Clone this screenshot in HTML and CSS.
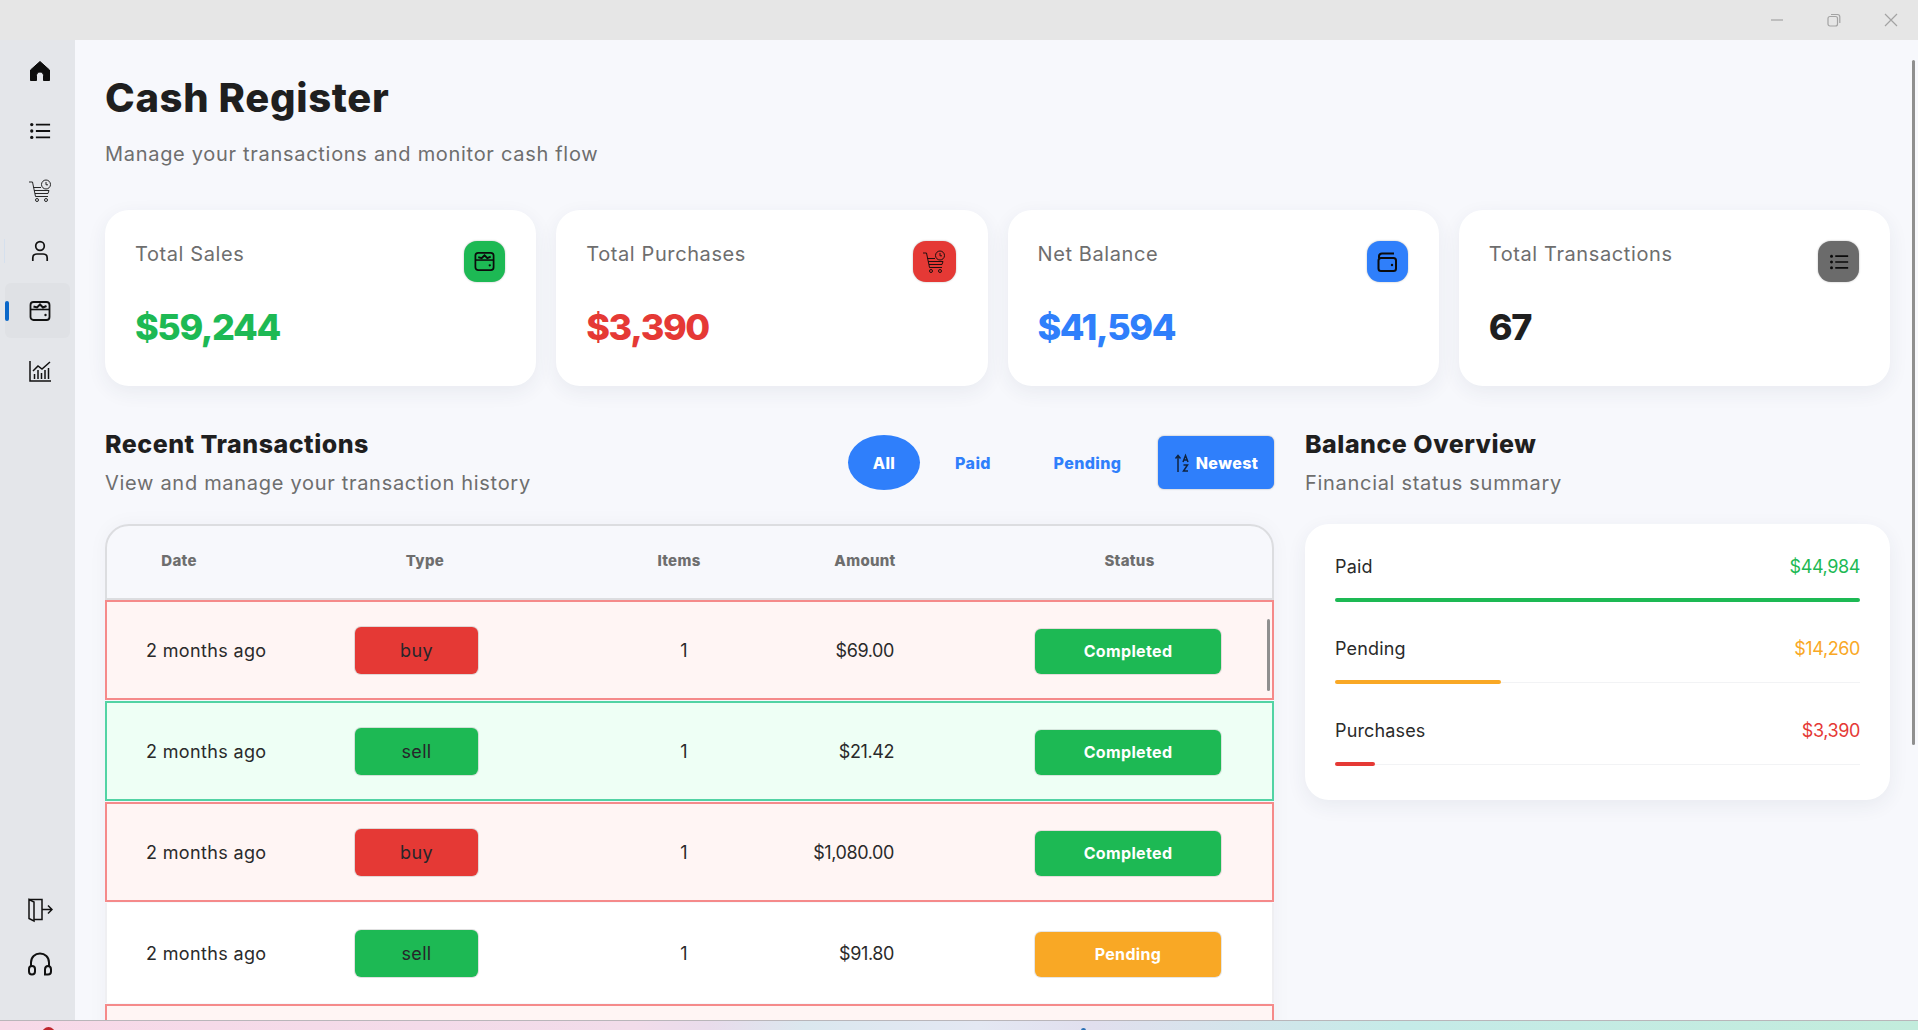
FILE: index.html
```html
<!DOCTYPE html>
<html lang="en">
<head>
    <meta charset="UTF-8">
    <meta name="viewport" content="width=device-width, initial-scale=1.0">
    <title>Cash Register</title>
    <link rel="stylesheet" href="styles.css">
</head>
<body>
    <svg class="sprites" width="0" height="0">
        <symbol id="i-wallet" viewBox="0 0 24 24">
            <rect x="2.500" y="3" width="19" height="18" rx="3" fill="none" stroke="currentColor" stroke-width="1.800"/>
            <path d="M2.500 10.500H21.500" fill="none" stroke="currentColor" stroke-width="1.600"/>
            <path d="M5.500 7.500L9 8.500L12 5.500L15 8.500L18.500 7" fill="none" stroke="currentColor" stroke-width="2"/>
            <circle cx="17.500" cy="16" r="1.200" fill="currentColor"/>
        </symbol>
        <symbol id="i-cart" viewBox="0 0 24 24">
            <path d="M1 3H4.500L7.500 17.500H20" fill="none" stroke="currentColor" stroke-width="0.900"/>
            <path d="M5.500 8.500H13M6.300 11.500H21M7 14.500H20L21 11.500" fill="none" stroke="currentColor" stroke-width="0.900"/>
            <circle cx="9" cy="21" r="1.500" fill="none" stroke="currentColor" stroke-width="0.900"/>
            <circle cx="18" cy="21" r="1.500" fill="none" stroke="currentColor" stroke-width="0.900"/>
            <circle cx="18" cy="5.500" r="4.500" fill="none" stroke="currentColor" stroke-width="0.900"/>
            <path d="M18 3V5.800H20" fill="none" stroke="currentColor" stroke-width="0.900"/>
        </symbol>
        <symbol id="i-list" viewBox="0 0 24 24">
            <circle cx="3" cy="5" r="1.800" fill="currentColor"/>
            <circle cx="3" cy="12" r="1.800" fill="currentColor"/>
            <circle cx="3" cy="19" r="1.800" fill="currentColor"/>
            <path d="M7.500 5H23M7.500 12H23M7.500 19H23" fill="none" stroke="currentColor" stroke-width="2"/>
        </symbol>
        <symbol id="i-card" viewBox="0 0 24 24">
            <path d="M4 8V6.500C4 4.500 5.500 3.500 7 3.500H19" fill="none" stroke="currentColor" stroke-width="2"/>
            <rect x="3.500" y="8" width="17.500" height="13" rx="2.500" fill="none" stroke="currentColor" stroke-width="2"/>
            <circle cx="17" cy="15" r="1.200" fill="currentColor"/>
        </symbol>
    </svg>

    <div class="titlebar">
        <svg class="win-btn" width="14" height="14" viewBox="0 0 14 14"><path d="M1 7H13" stroke="#a3a3a3" stroke-width="1.200"/></svg>
        <svg class="win-btn" width="14" height="14" viewBox="0 0 14 14"><rect x="1" y="3.500" width="9.500" height="9.500" rx="2" fill="none" stroke="#a3a3a3" stroke-width="1.200"/><path d="M4 1.500H10.500C12 1.500 12.800 2.300 12.800 3.800V10" fill="none" stroke="#a3a3a3" stroke-width="1.200"/></svg>
        <svg class="win-btn" width="14" height="14" viewBox="0 0 14 14"><path d="M1 1L13 13M13 1L1 13" stroke="#a3a3a3" stroke-width="1.200"/></svg>
    </div>

    <div class="app">
        <nav class="sidebar">
            <a class="nav-item">
                <svg width="24" height="24" viewBox="0 0 24 24"><path fill-rule="evenodd" d="M12 2.500L21.500 11V21.500H15.500V16.500C15.500 14.500 14 13 12 13S8.500 14.500 8.500 16.500V21.500H2.500V11Z" fill="#0d0d0d" stroke="#0d0d0d" stroke-width="1" stroke-linejoin="round"/></svg>
            </a>
            <a class="nav-item"><svg class="nav-ic" width="22" height="22"><use href="#i-list"/></svg></a>
            <a class="nav-item"><svg class="nav-ic" width="24" height="24"><use href="#i-cart"/></svg></a>
            <a class="nav-item nav-hover">
                <svg width="24" height="24" viewBox="0 0 24 24" fill="none" stroke="#111" stroke-width="1.700"><circle cx="12" cy="7" r="4.300"/><path d="M4.800 22V19C4.800 16.500 6.500 15 9 15H15C17.500 15 19.200 16.500 19.200 19V22"/></svg>
            </a>
            <a class="nav-item active"><svg class="nav-ic" width="24" height="24"><use href="#i-wallet"/></svg></a>
            <a class="nav-item">
                <svg width="24" height="24" viewBox="0 0 24 24" fill="none" stroke="#111" stroke-width="1.500"><path d="M2 2V22H23"/><path d="M5 12L10 7L14 10L22 3"/><path d="M6.500 20V15M10 20V11M13.500 20V14M17 20V11M20.500 20V9"/></svg>
            </a>
            <div class="nav-bottom">
                <a class="nav-item">
                    <svg width="26" height="26" viewBox="0 0 26 26" fill="none" stroke="#111" stroke-width="1.500"><path d="M2 2.500L7 5V24L2 21.500Z"/><path d="M2 2.500H15V22.500H7"/><path d="M15 12.500H25M21 8.500L25 12.500L21 16.500"/></svg>
                </a>
                <a class="nav-item">
                    <svg width="26" height="26" viewBox="0 0 26 26" fill="none" stroke="#111" stroke-width="2"><path d="M4 15V11.500C4 6 8 2.500 13 2.500S22 6 22 11.500V15"/><rect x="2" y="15" width="6" height="8.500" rx="3"/><path d="M17 23.500H21C22.800 23.500 24 22.200 24 20.500V18.500C24 16.500 22.800 15 21 15C19 15 18 16.500 18 18.500V23.500"/></svg>
                </a>
            </div>
        </nav>

        <main class="main">
            <h1>Cash Register</h1>
            <p class="subtitle">Manage your transactions and monitor cash flow</p>

            <section class="stats">
                <div class="stat-card">
                    <div class="stat-top">
                        <span class="stat-label">Total Sales</span>
                        <span class="stat-icon bg-green"><svg width="23" height="23"><use href="#i-wallet"/></svg></span>
                    </div>
                    <div class="stat-value green">$59,244</div>
                </div>
                <div class="stat-card">
                    <div class="stat-top">
                        <span class="stat-label">Total Purchases</span>
                        <span class="stat-icon stat-icon-wide bg-red"><svg width="24" height="24"><use href="#i-cart"/></svg></span>
                    </div>
                    <div class="stat-value red">$3,390</div>
                </div>
                <div class="stat-card">
                    <div class="stat-top">
                        <span class="stat-label">Net Balance</span>
                        <span class="stat-icon bg-blue"><svg width="24" height="24"><use href="#i-card"/></svg></span>
                    </div>
                    <div class="stat-value blue">$41,594</div>
                </div>
                <div class="stat-card">
                    <div class="stat-top">
                        <span class="stat-label">Total Transactions</span>
                        <span class="stat-icon bg-gray"><svg width="20" height="20"><use href="#i-list"/></svg></span>
                    </div>
                    <div class="stat-value">67</div>
                </div>
            </section>

            <section class="columns">
                <div class="left-col">
                    <div class="section-head">
                        <div>
                            <h2>Recent Transactions</h2>
                            <p class="section-sub">View and manage your transaction history</p>
                        </div>
                        <div class="filters">
                            <button class="filter filter-all">All</button>
                            <button class="filter filter-paid">Paid</button>
                            <button class="filter filter-pending">Pending</button>
                            <button class="filter-sort">
                                <svg width="16" height="20" viewBox="0 0 16 20" fill="none" stroke="#10233f" stroke-width="1.500"><path d="M4 19V3M1.500 5.500L4 2.500L6.500 5.500"/><path d="M9 9L11.500 2.500L14 9M10 7H13M9.500 12H13.500L9.500 18H14"/></svg>
                                Newest
                            </button>
                        </div>
                    </div>

                    <div class="table">
                        <div class="table-head">
                            <span>Date</span><span>Type</span><span>Items</span><span>Amount</span><span class="head-status">Status</span>
                        </div>
                        <div class="row row-buy">
                            <span>2 months ago</span>
                            <span><span class="type-badge bg-red">buy</span></span>
                            <span class="cell-items">1</span>
                            <span class="cell-amount">$69.00</span>
                            <span class="cell-status"><span class="status-badge bg-green">Completed</span></span>
                        </div>
                        <div class="row row-sell">
                            <span>2 months ago</span>
                            <span><span class="type-badge bg-green">sell</span></span>
                            <span class="cell-items">1</span>
                            <span class="cell-amount">$21.42</span>
                            <span class="cell-status"><span class="status-badge bg-green">Completed</span></span>
                        </div>
                        <div class="row row-buy">
                            <span>2 months ago</span>
                            <span><span class="type-badge bg-red">buy</span></span>
                            <span class="cell-items">1</span>
                            <span class="cell-amount">$1,080.00</span>
                            <span class="cell-status"><span class="status-badge bg-green">Completed</span></span>
                        </div>
                        <div class="row row-plain">
                            <span>2 months ago</span>
                            <span><span class="type-badge bg-green">sell</span></span>
                            <span class="cell-items">1</span>
                            <span class="cell-amount">$91.80</span>
                            <span class="cell-status"><span class="status-badge bg-orange">Pending</span></span>
                        </div>
                        <div class="row row-buy"></div>
                        <div class="table-scroll"></div>
                    </div>
                </div>

                <div class="right-col">
                    <h2>Balance Overview</h2>
                    <p class="section-sub">Financial status summary</p>
                    <div class="balance-card">
                        <div class="balance-row">
                            <div class="balance-text"><span>Paid</span><span class="green">$44,984</span></div>
                            <div class="bar"><div class="bar-fill bg-green" style="width: 100%"></div></div>
                        </div>
                        <div class="balance-row">
                            <div class="balance-text"><span>Pending</span><span class="orange">$14,260</span></div>
                            <div class="bar"><div class="bar-fill bg-orange" style="width: 31.7%"></div></div>
                        </div>
                        <div class="balance-row">
                            <div class="balance-text"><span>Purchases</span><span class="red">$3,390</span></div>
                            <div class="bar"><div class="bar-fill bg-red" style="width: 7.6%"></div></div>
                        </div>
                    </div>
                </div>
            </section>
            <div class="page-scroll"></div>
        </main>
    </div>

    <div class="desktop-strip"><span class="strip-dot"></span><span class="strip-mark"></span></div>
</body>
</html>
```

FILE: styles.css
```css
* {
    box-sizing: border-box;
}
html, body {
    margin: 0;
    height: 100%;
    overflow: hidden;
}
body {
    font-family: Inter, "Noto Sans", sans-serif;
    color: #1f1f1f;
    background: #e6e6e6;
}
.sprites {
    position: absolute;
}
p, h1, h2 {
    margin: 0;
}

.green { color: #1db954; }
.red { color: #e53935; }
.blue { color: #2f7ffb; }
.orange { color: #f9a825; }
.bg-green { background: #1db954; }
.bg-red { background: #e53935; }
.bg-blue { background: #2f7ffb; }
.bg-gray { background: #6b6b6b; }
.bg-orange { background: #f9a825; }

.titlebar {
    height: 40px;
    display: flex;
    justify-content: flex-end;
    align-items: center;
    gap: 43px;
    padding: 0 20px 1px 0;
    background: #e6e6e6;
}

.app {
    display: flex;
    height: 980px;
}
.sidebar {
    width: 75px;
    flex-shrink: 0;
    display: flex;
    flex-direction: column;
    gap: 5px;
    padding: 3px 5px 0;
    background: #e4e6ea;
}
.nav-item {
    position: relative;
    height: 55px;
    display: flex;
    align-items: center;
    justify-content: center;
    padding-left: 5px;
    border-radius: 6px;
    color: #111;
}
.nav-item.active {
    background: #dfe1e5;
}
.nav-item.active::before {
    content: "";
    position: absolute;
    left: 0;
    top: 18px;
    width: 4px;
    height: 20px;
    border-radius: 2px;
    background: #0a67c9;
}
.nav-hover::before {
    content: "";
    position: absolute;
    left: -1px;
    top: 16px;
    width: 1px;
    height: 24px;
    background: #d5e0ee;
}
.nav-bottom {
    margin-top: auto;
    padding-bottom: 29px;
    display: flex;
    flex-direction: column;
}
.nav-bottom .nav-item {
    height: 54px;
}

.main {
    position: relative;
    flex: 1;
    overflow: hidden;
    padding: 30px 28px 0 30px;
    background: #f7f8fc;
}
h1 {
    font-size: 40px;
    line-height: 56px;
    font-weight: 800;
    letter-spacing: 0.65px;
}
.subtitle {
    margin-top: 14px;
    font-size: 20px;
    line-height: 28px;
    color: #6e6e6e;
    letter-spacing: 0.7px;
}

.stats {
    display: grid;
    grid-template-columns: repeat(4, 1fr);
    gap: 20px;
    margin-top: 42px;
}
.stat-card {
    height: 176px;
    padding: 30px 31px 0 30px;
    background: #fff;
    border-radius: 24px;
    box-shadow: 0 6px 20px rgba(40, 50, 80, 0.07);
}
.stat-top {
    display: flex;
    justify-content: space-between;
    align-items: flex-start;
}
.stat-label {
    font-size: 20px;
    line-height: 28px;
    color: #6e6e6e;
    letter-spacing: 0.6px;
}
.stat-icon {
    width: 41px;
    height: 41px;
    margin-top: 1px;
    display: flex;
    align-items: center;
    justify-content: center;
    border-radius: 13px;
    color: #0b0b0b;
    box-shadow: 0 0 2px rgba(0, 0, 0, 0.3);
}
.stat-icon-wide {
    width: 43px;
    margin-right: 1px;
}
.stat-value {
    margin-top: 20px;
    font-size: 36px;
    line-height: 50px;
    font-weight: 800;
    letter-spacing: -1.4px;
}

.columns {
    display: grid;
    grid-template-columns: 1169px 585px;
    gap: 31px;
    margin-top: 40px;
}
.section-head {
    display: flex;
    justify-content: space-between;
    align-items: flex-start;
}
h2 {
    font-size: 25px;
    line-height: 36px;
    font-weight: 800;
    letter-spacing: 0.5px;
}
.section-sub {
    margin-top: 7px;
    font-size: 20px;
    line-height: 28px;
    color: #6e6e6e;
    letter-spacing: 0.7px;
}
.filters {
    display: flex;
    align-items: center;
    height: 55px;
    margin-top: 9px;
}
.filter, .filter-sort {
    font-family: inherit;
    font-size: 16px;
    font-weight: 800;
    letter-spacing: 0.4px;
    border: none;
    cursor: pointer;
}
.filter {
    height: 55px;
    background: transparent;
    color: #2f7ffb;
    padding: 0;
}
.filter-all {
    width: 72px;
    border-radius: 50%;
    background: #2f7ffb;
    color: #fff;
}
.filter-paid {
    width: 36px;
    margin-left: 35px;
}
.filter-pending {
    width: 69px;
    margin-left: 62px;
}
.filter-sort {
    width: 116px;
    height: 53px;
    margin-left: 36px;
    display: flex;
    align-items: center;
    justify-content: center;
    gap: 6px;
    border-radius: 6px;
    background: #2f7ffb;
    color: #fff;
    box-shadow: 0 0 2px rgba(0, 0, 0, 0.35);
}

.table {
    position: relative;
    margin-top: 27px;
    border-radius: 24px 24px 0 0;
    box-shadow: 0 0 20px rgba(40, 50, 80, 0.04);
}
.table-head {
    display: grid;
    grid-template-columns: 144px 348px 160px 212px 303px;
    align-items: center;
    height: 76px;
    padding-bottom: 3px;
    border: 2px solid #dcdde0;
    border-radius: 24px 24px 0 0;
    font-size: 15px;
    font-weight: 800;
    letter-spacing: 0.3px;
    color: #6e6e6e;
    text-align: center;
}
.head-status {
    padding-left: 14px;
}
.row {
    display: grid;
    grid-template-columns: 209px 269px 120px 150px 327px;
    align-items: center;
    height: 100px;
    margin-bottom: 1px;
    padding-left: 39px;
    border: 2px solid transparent;
    font-size: 18px;
    letter-spacing: 0.35px;
    background: #fff;
    color: #2a2a2a;
}
.row-buy {
    background: #fff5f4;
    border-color: #f58a8a;
}
.row-sell {
    background: #eefff5;
    border-color: #52d3a4;
}
.row-plain {
    background: #fff;
    border-left-color: #efeff2;
    border-right-color: #efeff2;
    border-top: none;
    border-bottom: none;
}
.cell-items {
    text-align: center;
}
.cell-amount {
    text-align: right;
    letter-spacing: -0.4px;
}
.cell-status {
    display: flex;
    justify-content: flex-end;
}
.type-badge {
    display: flex;
    align-items: center;
    justify-content: center;
    width: 123px;
    height: 47px;
    border-radius: 6px;
    color: #26262a;
    box-shadow: 0 0 0 1px rgba(0, 0, 0, 0.12);
}
.status-badge {
    display: flex;
    align-items: center;
    justify-content: center;
    width: 186px;
    height: 45px;
    margin-top: 2px;
    border-radius: 6px;
    color: #fff;
    font-size: 16px;
    font-weight: 700;
    box-shadow: 0 0 0 1px rgba(0, 0, 0, 0.1);
}
.table-scroll {
    position: absolute;
    left: 1162px;
    top: 95px;
    width: 3px;
    height: 72px;
    border-radius: 2px;
    background: #8f8f8f;
}

.balance-card {
    height: 276px;
    margin-top: 27px;
    padding: 26px 30px 0;
    background: #fff;
    border-radius: 24px;
    box-shadow: 0 6px 20px rgba(40, 50, 80, 0.07);
}
.balance-row {
    height: 82px;
}
.balance-text {
    display: flex;
    justify-content: space-between;
    font-size: 18px;
    line-height: 34px;
    letter-spacing: 0.15px;
    color: #2a2a2a;
}
.balance-text span + span {
    letter-spacing: -0.4px;
}
.bar {
    height: 4px;
    margin-top: 14px;
    background: linear-gradient(#f2f3f5, #f2f3f5) center / 100% 1px no-repeat;
}
.bar-fill {
    height: 100%;
    border-radius: 2px;
}
.page-scroll {
    position: absolute;
    right: 3px;
    top: 20px;
    width: 3px;
    height: 685px;
    border-radius: 2px;
    background: #8f8f8f;
}

.desktop-strip {
    position: relative;
    height: 10px;
    overflow: hidden;
    border-top: 1px solid #b9b6ba;
    background: linear-gradient(90deg, #f8d9e8 0%, #f2dcea 33%, #e9dcec 37%, #dbe8ef 42%, #e4e8f3 51%, #e1dfee 57%, #c5ebe8 73%, #c2ecdc 100%);
}
.strip-dot {
    position: absolute;
    left: 42px;
    top: 6px;
    width: 13px;
    height: 13px;
    border-radius: 50%;
    background: #c0262d;
}
.strip-mark {
    position: absolute;
    left: 1081px;
    top: 7px;
    width: 5px;
    height: 5px;
    border-radius: 50%;
    background: #2a6fb5;
}
```
